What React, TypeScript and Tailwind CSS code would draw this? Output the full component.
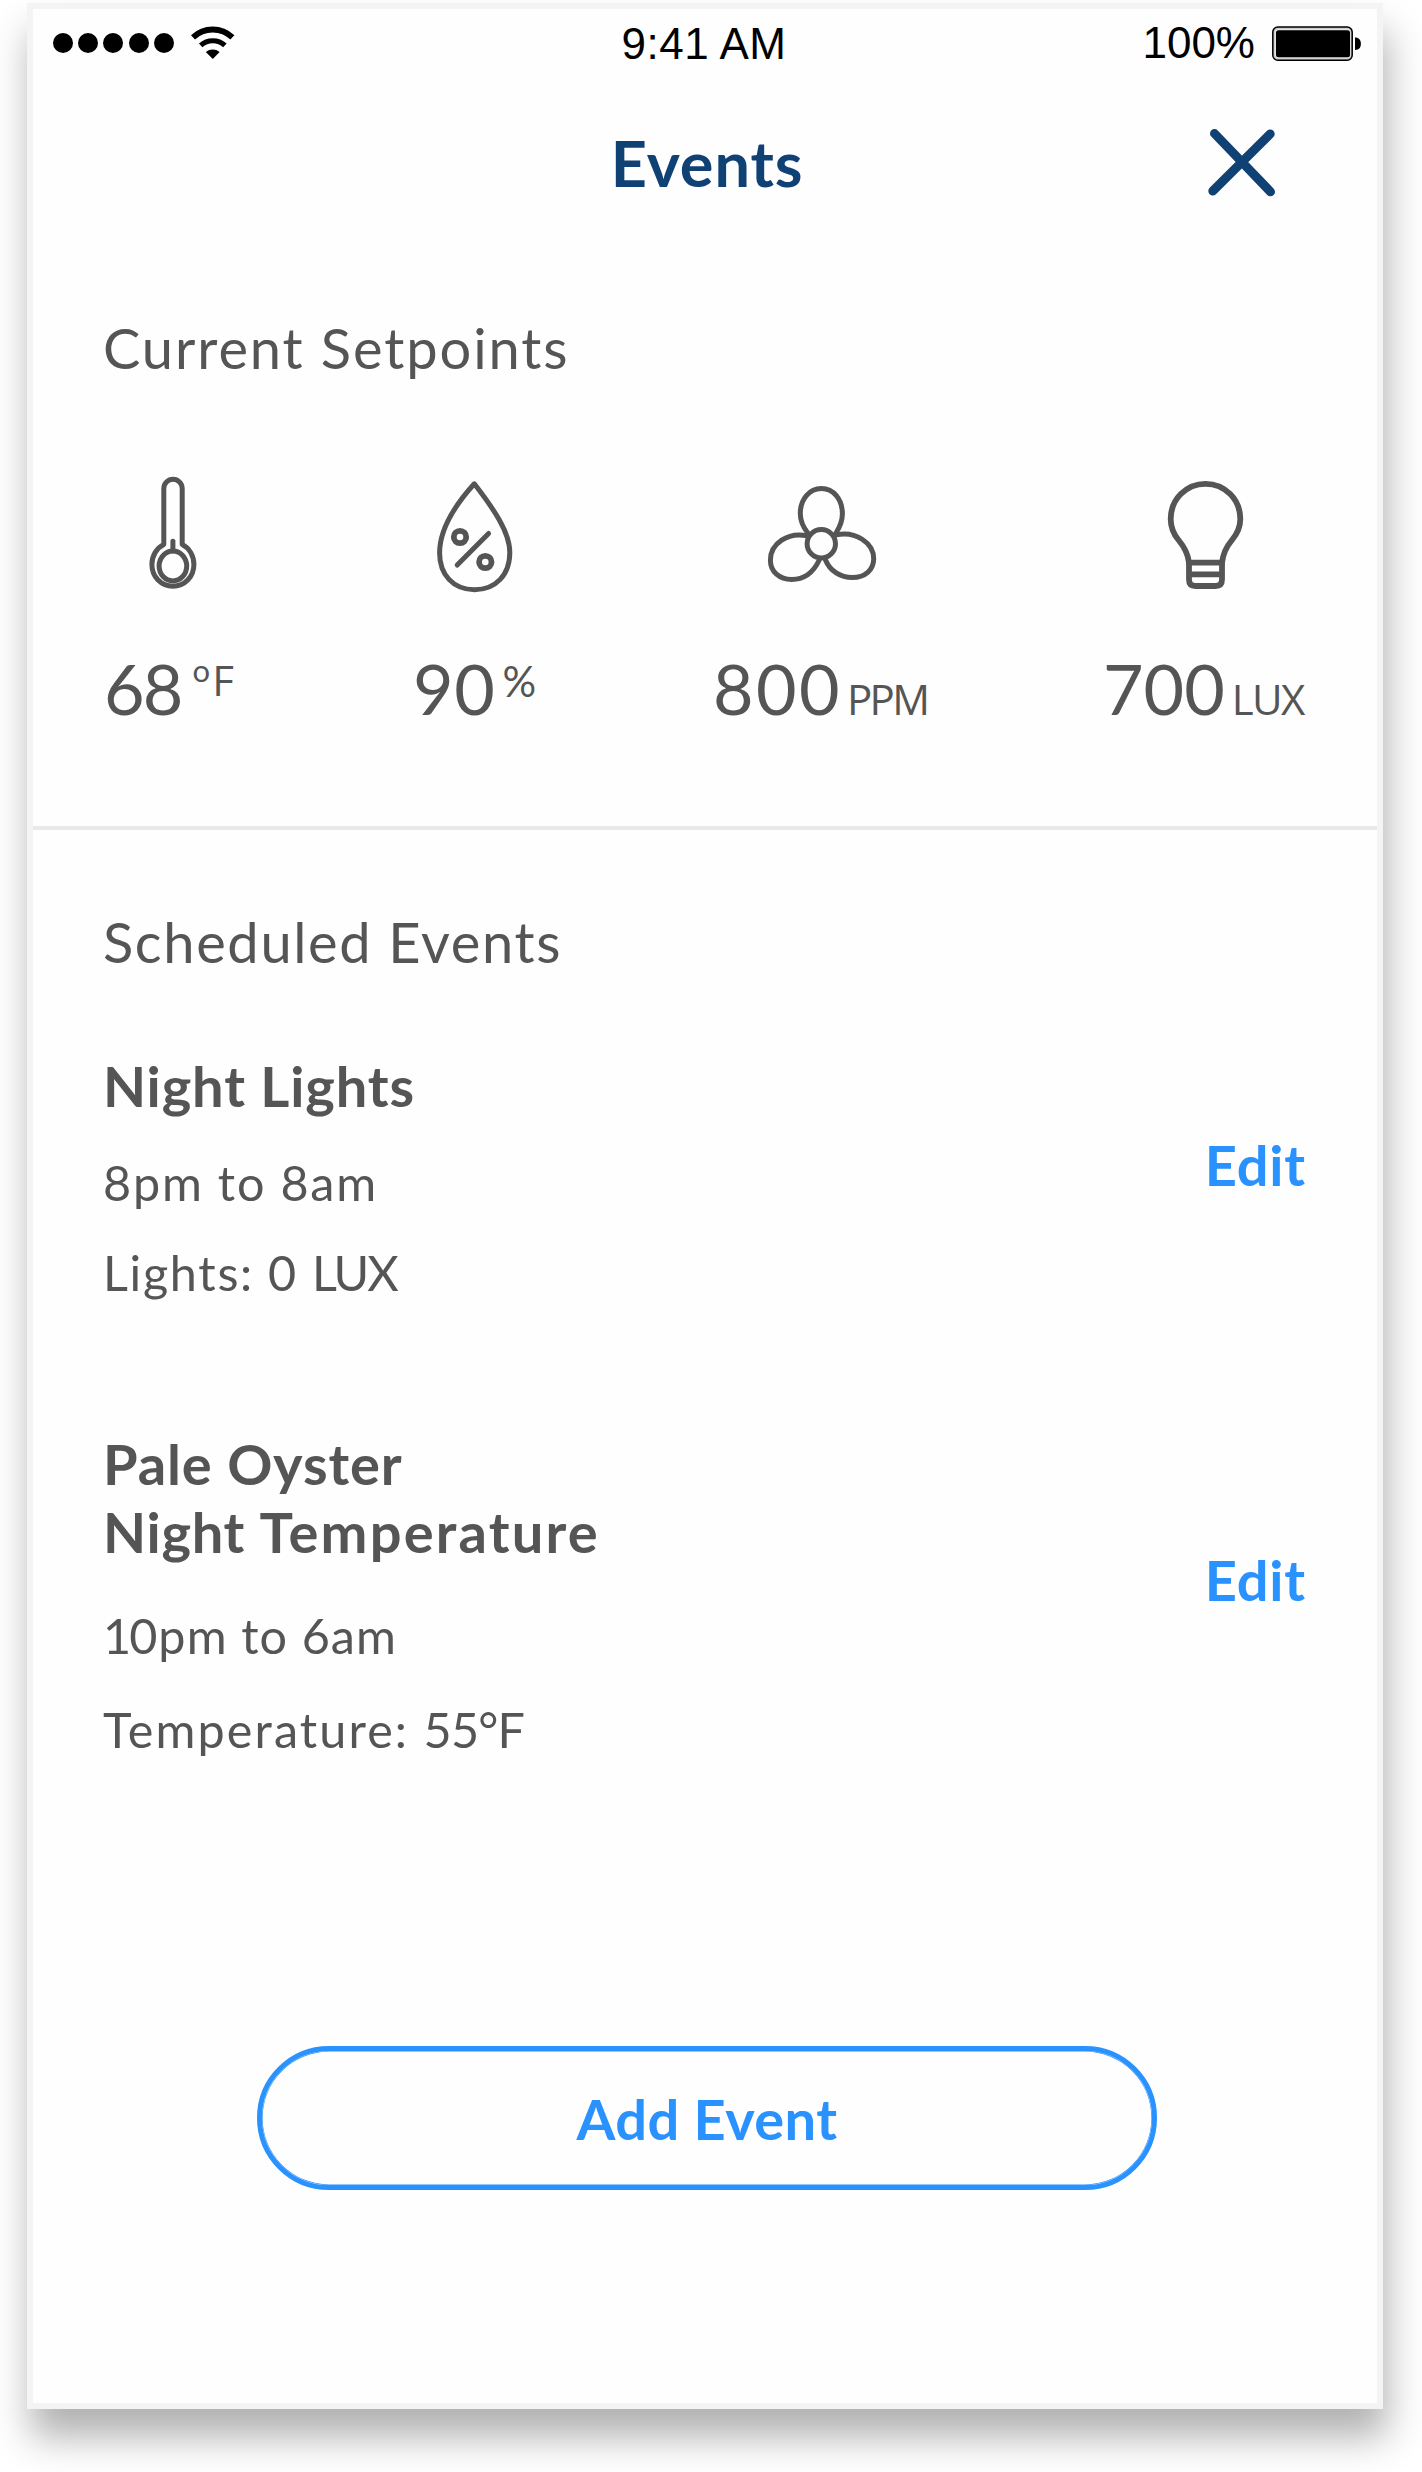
import type { ReactNode } from 'react';

function SignalDots() {
  return (
    <div className="flex gap-[5.2px]">
      {[0, 1, 2, 3, 4].map((i) => (
        <span key={i} className="size-5 rounded-full bg-black" />
      ))}
    </div>
  );
}

function WifiIcon() {
  return (
    <svg width="44" height="34" viewBox="191 25 44 34" fill="none" stroke="#000">
      <path d="M193 36.4A28.5 28.5 0 0 1 232.4 36.4" strokeWidth="5.8" />
      <path d="M200.7 44.4A18 18 0 0 1 224.9 44.4" strokeWidth="5.2" />
      <path d="M205.8 50.9A11 11 0 0 1 219.6 50.9L212.8 58Z" fill="#000" stroke="none" />
    </svg>
  );
}

function BatteryIcon() {
  return (
    <svg width="90" height="36" viewBox="1272 25 90 36">
      <rect x="1272.8" y="26" width="79.4" height="33.2" rx="5" fill="#c4c4c4" stroke="#000" strokeWidth="1.5" />
      <rect x="1274.6" y="27.8" width="76" height="29.6" rx="3.6" fill="#e4e4e4" />
      <rect x="1276" y="29.2" width="74" height="27" rx="2.5" fill="#000" />
      <path d="M1355 36.5C1359 36.5 1360.9 39 1360.9 42.8S1359 49 1355 49Z" />
    </svg>
  );
}

function CloseIcon() {
  return (
    <svg width="68" height="68" viewBox="1208.5 128.5 68 68" fill="none" stroke="#104175" strokeWidth="9" strokeLinecap="round">
      <path d="M1215 133L1271 191.3M1270.7 133.4L1213.3 190.5" />
    </svg>
  );
}

const iconProps = {
  width: 120,
  height: 124,
  fill: 'none',
  stroke: '#555555',
  strokeWidth: 5,
  strokeLinecap: 'round' as const,
  strokeLinejoin: 'round' as const,
};

function ThermometerIcon() {
  return (
    <svg {...iconProps} viewBox="109.5 472 120 124">
      <path d="M163.3 544.5V488.5A9.2 9.2 0 0 1 181.7 488.5V544.5C189 548 193.4 556 193.4 564.5C193.4 577 184 586.3 172.4 586.3S151.4 577 151.4 564.5C151.4 556 156 548 163.3 544.5Z" />
      <ellipse cx="172.4" cy="566" rx="13.8" ry="14.9" />
      <path d="M172.4 541.3V551" />
    </svg>
  );
}

function HumidityIcon() {
  return (
    <svg {...iconProps} viewBox="414 472 120 124">
      <path d="M474.3 483.8C456 504 439.6 528 439.6 553C439.6 574.5 453 589.7 474.5 589.7C496 589.7 509.8 574.5 509.8 552.5C509.8 532 493 508 474.3 483.8Z" />
      <circle cx="460" cy="537" r="6.2" strokeWidth="5.8" />
      <circle cx="485.3" cy="562" r="6.2" strokeWidth="5.8" />
      <path d="M488.6 533.4L457.2 565" />
    </svg>
  );
}

function FanIcon() {
  return (
    <svg {...iconProps} viewBox="759 472 120 124">
      <circle cx="821.3" cy="543.7" r="14.2" />
      <path d="M807.8 533C803 527 800.3 520.5 800.3 513.5C800.3 499 809.5 488.5 821.4 488.5S842.4 499 842.4 514C842.4 521 839.8 527 836 533" />
      <path d="M807.7 536C788 531.5 770.4 543.5 770.4 560.2C770.4 571.7 779.5 579.5 791.7 579.5C805 579.5 813.5 572 819 560.5" />
      <path d="M836 534.9C855.5 530.5 873.7 543 873.7 558.8C873.7 570 865 577.6 852.3 577.6C840.5 577.6 830 571 825.5 560" />
    </svg>
  );
}

function BulbIcon() {
  return (
    <svg {...iconProps} viewBox="1145 472 120 124" strokeWidth="5.8">
      <path d="M1189 562.7C1188 554 1184 546.5 1178.5 540C1173.5 534 1170.7 527.5 1170.7 519C1170.7 499.5 1186 483.8 1205.5 483.8S1240.3 499.5 1240.3 519C1240.3 527.5 1237 534 1232 540C1226.5 546.5 1223 554 1222 562.7" />
      <path d="M1189 562.7H1222V579.5Q1222 586 1215.5 586H1195.5Q1189 586 1189 579.5ZM1189 574.3H1222" />
    </svg>
  );
}

function Setpoint({ icon, value, unit, className }: { icon: ReactNode; value: ReactNode; unit: ReactNode; className: string }) {
  return (
    <div className={`flex flex-col items-center ${className}`}>
      {icon}
      <div className="mt-[50px] flex h-[84px] w-full items-baseline pl-px text-[70px] leading-[84px] whitespace-nowrap">
        {value}
        {unit}
      </div>
    </div>
  );
}

function EditButton() {
  return (
    <button className="mb-[28px] text-[56px] leading-[56px] font-bold tracking-[0.8px] text-[#2992ff]">Edit</button>
  );
}

export default function App() {
  return (
    <div className="flex h-[2472px] w-[1422px] overflow-hidden bg-white pt-[3px] pl-[27px] font-['Lato',sans-serif] text-[#555555]">
      <main className="flex h-[2406px] w-[1356px] flex-col border-[6px] border-[#f4f4f4] bg-[#fefefe] shadow-[4px_28px_36px_rgba(0,0,0,0.31)]">
        <div className="grid h-[68px] grid-cols-[1fr_auto_1fr] items-center pr-[15px] pl-[20px] font-['Liberation_Sans',sans-serif] text-[44px] leading-[68px] text-black">
          <div className="-mt-px flex items-center gap-[17px]">
            <SignalDots />
            <WifiIcon />
          </div>
          <span className="mt-px mr-[7px] tracking-[0.5px]">9:41 AM</span>
          <div className="flex items-center justify-end gap-[17px]">
            <span className="-mt-px">100%</span>
            <BatteryIcon />
          </div>
        </div>

        <header className="grid h-[169px] grid-cols-[1fr_auto_1fr] items-center pr-[101px] pl-[105px]">
          <span />
          <h1 className="mt-px text-[63px] leading-[169px] font-bold tracking-[0.9px] text-[#104175]">Events</h1>
          <button className="mt-[2px] justify-self-end" aria-label="Close">
            <CloseIcon />
          </button>
        </header>

        <section className="h-[584px] shrink-0 border-b-4 border-[#e9e9e9] pt-[74px] pl-[70px]">
          <h2 className="text-[56px] leading-[56px] tracking-[1.9px]">Current Setpoints</h2>
          <div className="mt-[96px] flex gap-[176px]">
            <Setpoint
              className="w-[133px]"
              icon={<ThermometerIcon />}
              value={<span className="tracking-[-1.8px]">68</span>}
              unit={
                <>
                  <span className="mt-[9px] ml-[11px] self-start text-[31px] leading-[31px]">o</span>
                  <span className="mt-[13px] ml-[2px] self-start font-['Open_Sans',sans-serif] text-[42px] leading-[42px]">F</span>
                </>
              }
            />
            <Setpoint
              className="w-[124px]"
              icon={<HumidityIcon />}
              value={<span className="tracking-[0.7px]">90</span>}
              unit={<span className="mt-[14px] ml-[7px] self-start text-[42px] leading-[42px]">%</span>}
            />
            <Setpoint
              className="w-[214px]"
              icon={<FanIcon />}
              value={<span className="tracking-[2.4px]">800</span>}
              unit={<span className="ml-[5px] font-['Open_Sans',sans-serif] text-[42px] leading-[42px] tracking-[-2.7px]">PPM</span>}
            />
            <Setpoint
              className="w-[205px]"
              icon={<BulbIcon />}
              value={<span>700</span>}
              unit={<span className="ml-[7px] font-['Open_Sans',sans-serif] text-[42px] leading-[42px] tracking-[-1.7px]">LUX</span>}
            />
          </div>
        </section>

        <section className="pt-[84px] pr-[71px] pl-[70px]">
          <h2 className="text-[56px] leading-[56px] tracking-[1.65px]">Scheduled Events</h2>

          <article className="mt-[88px] flex items-center justify-between">
            <div className="text-[48.5px] leading-[56px]">
              <h3 className="text-[56px] font-bold tracking-[0.85px]">Night Lights</h3>
              <p className="mt-[40px] tracking-[1.8px]">8pm to 8am</p>
              <p className="mt-[34px]">
                <span className="tracking-[1.7px]">Lights: 0 </span>
                <span className="tracking-[-2px]">LUX</span>
              </p>
            </div>
            <EditButton />
          </article>

          <article className="mt-[130px] flex items-center justify-between">
            <div className="text-[48.5px] leading-[56px]">
              <h3 className="text-[56px] leading-[68px] font-bold">
                <span className="block tracking-[0.9px]">Pale Oyster</span>
                <span className="tracking-[0.7px]">Night </span>
                <span className="tracking-[2.2px]">Temperature</span>
              </h3>
              <p className="mt-[41px]">
                <span className="tracking-[-2px]">1</span>
                <span className="tracking-[1.1px]">0pm to 6am</span>
              </p>
              <p className="mt-[38px]">
                <span className="tracking-[2.1px]">Temperature: </span>
                <span className="tracking-[-0.8px]">55°F</span>
              </p>
            </div>
            <EditButton />
          </article>
        </section>

        <button className="mt-[289px] ml-[224px] h-[144px] w-[900px] rounded-full border-[5px] border-[#2992ff] pt-[2px] text-[56px] leading-[56px] font-bold tracking-[0.4px] text-[#2992ff] shadow-[inset_0_0_0_0.6px_#2992ff]">
          Add Event
        </button>
      </main>
    </div>
  );
}
